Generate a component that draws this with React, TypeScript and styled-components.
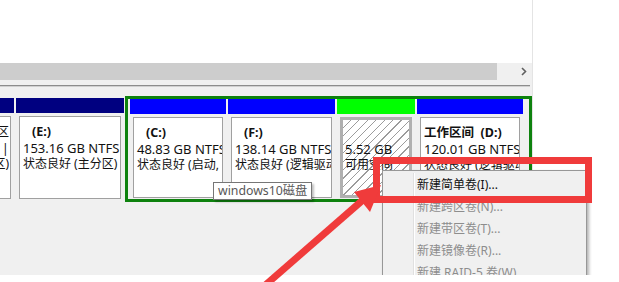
import React from "react";
import styled, { createGlobalStyle } from "styled-components";

const Global = createGlobalStyle`
  html, body { margin: 0; padding: 0; background: #ffffff; }
  body { width: 619px; height: 282px; overflow: hidden; font-family: "Noto Sans", "Noto Sans CJK SC", sans-serif; }
`;

const Page = styled.div`
  position: relative;
  width: 619px;
  height: 282px;
  overflow: hidden;
  background: #ffffff;
`;

const Screen = styled.div`
  position: relative;
  display: flex;
  height: 275px;
  overflow: hidden;
`;

const Manager = styled.div`
  width: 532px;
  flex: none;
  display: flex;
  flex-direction: column;
  background: #f0f0f0;
  border-right: 1px solid #e4e4e4;
  box-shadow: 1px 0 0 #9a9a9a, 2px 0 0 #bdbdbd;
`;

const Outside = styled.div`
  flex: 1;
  background: #ffffff;
`;

const ListArea = styled.div`
  height: 63px;
  background: #ffffff;
`;

const HScroll = styled.div`
  height: 17px;
  display: flex;
  background: #f0f0f0;
`;

const Thumb = styled.div`
  width: 497px;
  background: #cdcdcd;
`;

const Track = styled.div`
  flex: 1;
`;

const ArrowBtn = styled.div`
  width: 17px;
  display: flex;
  align-items: center;
  justify-content: center;
`;

const Splitter = styled.div`
  height: 16px;
  display: flex;
  flex-direction: column;
  padding-top: 5px;
  box-sizing: border-box;
`;

const SplitLine = styled.div`
  height: 2px;
  margin-right: 2px;
  border-top: 1px solid #8c8c8c;
  border-bottom: 1px solid #d0d0d0;
  box-sizing: border-box;
`;

const DiskRow = styled.div`
  height: 106px;
  display: flex;
  align-items: stretch;
`;

const Column = styled.div<{ $w: number; $outer?: boolean }>`
  width: ${(p) => p.$w}px;
  flex: none;
  display: flex;
  flex-direction: column;
  margin: ${(p) => (p.$outer ? "2px 0 2px 0" : "0")};
`;

const Header = styled.div<{ $c: string }>`
  height: 15px;
  flex: none;
  background: ${(p) => p.$c};
`;

const Box = styled.div<{ $free?: boolean; $clip?: boolean }>`
  flex: 1;
  margin: 3px 3px 1px;
  background: ${(p) =>
    p.$free
      ? "repeating-linear-gradient(135deg, #ffffff 0px, #ffffff 5px, #9c9c9c 5px, #9c9c9c 6px)"
      : "#ffffff"};
  border: ${(p) => (p.$free ? "3px solid #b0b0b0" : "1px solid #a0a0a0")};
  padding: ${(p) => (p.$free ? "5px 2px" : "7px 3px")};
  ${(p) => (p.$clip ? "margin-left: 0; border-left: none; padding: 7px 1px 5px 0; align-items: flex-end;" : "")}
  display: flex;
  flex-direction: column;
  overflow: hidden;
  font-size: 12px;
  line-height: 16px;
  color: #111111;
  white-space: nowrap;
`;

const Line = styled.div<{ $latin?: boolean }>`
  height: 16px;
  font-size: ${(p) => (p.$latin ? "13px" : "12px")};
`;

const Name = styled.div<{ $indent?: boolean }>`
  height: 16px;
  font-weight: 700;
  font-size: 12.5px;
  padding-left: ${(p) => (p.$indent ? "9px" : "0")};
`;

const Gap = styled.div<{ $w: number }>`
  width: ${(p) => p.$w}px;
  flex: none;
`;

const Extended = styled.div`
  width: 397px;
  flex: none;
  display: flex;
  gap: 2px;
  padding: 0 2px;
  border: 3px solid #0e820e;
`;

const Footer = styled.div`
  flex: 1;
  background: #f0f0f0;
`;

const Tooltip = styled.div`
  position: absolute;
  left: 213px;
  top: 182px;
  width: 99px;
  height: 18px;
  box-sizing: border-box;
  background: #ffffff;
  border: 1px solid #767676;
  box-shadow: 2px 2px 2px rgba(0, 0, 0, 0.25);
  font-size: 12.3px;
  line-height: 16px;
  color: #575757;
  padding-left: 4px;
  white-space: nowrap;
  overflow: hidden;
`;

const Menu = styled.div`
  position: absolute;
  left: 382px;
  top: 170px;
  width: 205px;
  height: 120px;
  box-sizing: border-box;
  background: #f0f0f0;
  border: 1px solid #979797;
  box-shadow: 2px 2px 3px rgba(0, 0, 0, 0.3);
  padding: 3px 2px 2px;
  display: flex;
  flex-direction: column;
  &::before {
    content: "";
    position: absolute;
    left: 30px;
    top: 2px;
    bottom: 2px;
    width: 1px;
    background: #e0e0e0;
    box-shadow: 1px 0 0 #ffffff;
  }
`;

const MenuItem = styled.div<{ $disabled?: boolean }>`
  height: 22px;
  line-height: 22px;
  padding-left: 32px;
  font-size: 12px;
  color: ${(p) => (p.$disabled ? "#8d8d8d" : "#111111")};
  white-space: nowrap;
`;

const Highlight = styled.div`
  position: absolute;
  left: 373px;
  top: 157px;
  width: 219px;
  height: 46px;
  box-sizing: border-box;
  border: 7px solid #f03b3b;
`;

const ArrowSvg = styled.svg`
  position: absolute;
  left: 0;
  top: 0;
  pointer-events: none;
`;

export default function App() {
  return (
    <>
      <Global />
      <Page>
        <Screen>
          <Manager>
            <ListArea />
            <HScroll>
              <Thumb />
              <Track />
              <ArrowBtn>
                <svg width="6" height="9" viewBox="0 0 6 9">
                  <path d="M1 1 L4.5 4.5 L1 8" fill="none" stroke="#606060" strokeWidth="1.6" />
                </svg>
              </ArrowBtn>
            </HScroll>
            <Splitter>
              <SplitLine />
            </Splitter>
            <DiskRow>
              <Column $w={14} $outer>
                <Header $c="#000080" />
                <Box $clip>
                  <Line>保留区</Line>
                  <Line $latin>NTFS |</Line>
                  <Line>(主分区)</Line>
                </Box>
              </Column>
              <Gap $w={2} />
              <Column $w={108} $outer>
                <Header $c="#000080" />
                <Box>
                  <Name $indent>(E:)</Name>
                  <Line $latin>153.16 GB NTFS</Line>
                  <Line>状态良好 (主分区)</Line>
                </Box>
              </Column>
              <Gap $w={1} />
              <Extended>
                <Column $w={96}>
                  <Header $c="#0000ff" />
                  <Box>
                    <Name $indent>(C:)</Name>
                    <Line $latin>48.83 GB NTFS</Line>
                    <Line>状态良好 (启动, 页面文件)</Line>
                  </Box>
                </Column>
                <Column $w={107}>
                  <Header $c="#0000ff" />
                  <Box>
                    <Name $indent>(F:)</Name>
                    <Line $latin>138.14 GB NTFS</Line>
                    <Line>状态良好 (逻辑驱动器)</Line>
                  </Box>
                </Column>
                <Column $w={78}>
                  <Header $c="#00ff00" />
                  <Box $free>
                    <Name />
                    <Line $latin>5.52 GB</Line>
                    <Line>可用空间</Line>
                  </Box>
                </Column>
                <Column $w={106}>
                  <Header $c="#0000ff" />
                  <Box>
                    <Name>工作区间&nbsp;&nbsp;(D:)</Name>
                    <Line $latin>120.01 GB NTFS</Line>
                    <Line>状态良好 (逻辑驱动器)</Line>
                  </Box>
                </Column>
              </Extended>
            </DiskRow>
            <Footer />
          </Manager>
          <Outside />
          <Tooltip>windows10磁盘</Tooltip>
          <Menu>
            <MenuItem>新建简单卷(I)...</MenuItem>
            <MenuItem $disabled>新建跨区卷(N)...</MenuItem>
            <MenuItem $disabled>新建带区卷(T)...</MenuItem>
            <MenuItem $disabled>新建镜像卷(R)...</MenuItem>
            <MenuItem $disabled>新建 RAID-5 卷(W)...</MenuItem>
          </Menu>
          <Highlight />
        </Screen>
        <ArrowSvg width="619" height="282" viewBox="0 0 619 282">
          <line x1="262" y1="288" x2="364" y2="199" stroke="#f03b3b" strokeWidth="7" />
          <polygon points="381,185 354,192 370,212" fill="#f03b3b" />
        </ArrowSvg>
      </Page>
    </>
  );
}
